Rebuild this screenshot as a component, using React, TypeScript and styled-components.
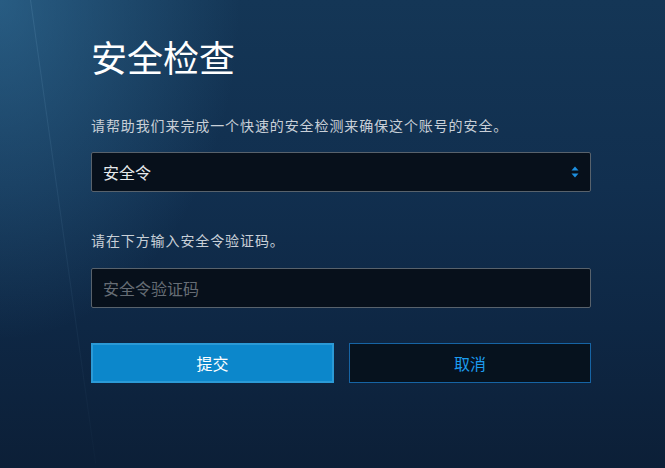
import React from "react";
import styled, { createGlobalStyle } from "styled-components";

const GlobalStyle = createGlobalStyle`
  html, body {
    margin: 0;
    padding: 0;
    width: 665px;
    height: 468px;
    overflow: hidden;
  }
  body {
    font-family: "Noto Sans CJK SC", "Noto Sans", sans-serif;
    background: #0e2440;
  }
`;

const Page = styled.div`
  position: relative;
  width: 665px;
  height: 468px;
  box-sizing: border-box;
  padding: 36px 0 0 91px;
  overflow: hidden;
  background:
    radial-gradient(ellipse 240px 340px at 0px 0px, rgba(60, 130, 175, 0.5), rgba(60, 130, 175, 0) 100%),
    linear-gradient(180deg, #143656 0%, #112f4f 40%, #0e2744 70%, #0c1f37 100%);
`;

const Streak = styled.div`
  position: absolute;
  left: 30px;
  top: 0;
  width: 1px;
  height: 468px;
  background: linear-gradient(180deg, rgba(120, 170, 205, 0.18), rgba(120, 170, 205, 0.02));
  transform: rotate(-8deg);
  transform-origin: top left;
`;

const Form = styled.div`
  position: relative;
  width: 500px;
  display: flex;
  flex-direction: column;
`;

const Title = styled.h1`
  margin: 0;
  font-size: 36px;
  line-height: 40px;
  font-weight: 400;
  color: #ffffff;
`;

const Text = styled.p<{ $top: number }>`
  margin: ${(p) => p.$top}px 0 0 0;
  font-size: 14px;
  line-height: 20px;
  letter-spacing: 0.9px;
  color: #c9d0d8;
`;

const Field = styled.div<{ $top: number }>`
  margin-top: ${(p) => p.$top}px;
  height: 40px;
  box-sizing: border-box;
  border: 1px solid #58626c;
  border-radius: 2px;
  background: #07101b;
  display: flex;
  align-items: center;
  padding: 0 11px 0 11px;
  font-size: 16px;
`;

const Value = styled.span`
  flex: 1;
  color: #e6e9ec;
`;

const Placeholder = styled.span`
  flex: 1;
  color: #666d75;
`;

const Buttons = styled.div`
  margin-top: 35px;
  display: grid;
  grid-template-columns: 243px 242px;
  column-gap: 15px;
`;

const Button = styled.button<{ $primary?: boolean }>`
  height: 40px;
  box-sizing: border-box;
  font-family: "Noto Sans CJK SC", "Noto Sans", sans-serif;
  font-size: 16px;
  padding: 0;
  cursor: pointer;
  background: ${(p) => (p.$primary ? "#0c87cb" : "#06121e")};
  border: ${(p) => (p.$primary ? "2px solid #2b9ad6" : "1px solid #1664a4")};
  color: ${(p) => (p.$primary ? "#ffffff" : "#1c9cee")};
`;

const Arrows = () => (
  <svg width="8" height="12" viewBox="0 0 8 12">
    <path d="M4 0.5 L7.5 4.5 H0.5 Z" fill="#1d8fe0" />
    <path d="M4 11.5 L7.5 7.5 H0.5 Z" fill="#1d8fe0" />
  </svg>
);

export default function App() {
  return (
    <Page>
      <GlobalStyle />
      <Streak />
      <Form>
        <Title>安全检查</Title>
        <Text $top={39}>请帮助我们来完成一个快速的安全检测来确保这个账号的安全。</Text>
        <Field $top={17}>
          <Value>安全令</Value>
          <Arrows />
        </Field>
        <Text $top={38}>请在下方输入安全令验证码。</Text>
        <Field $top={18}>
          <Placeholder>安全令验证码</Placeholder>
        </Field>
        <Buttons>
          <Button $primary>提交</Button>
          <Button>取消</Button>
        </Buttons>
      </Form>
    </Page>
  );
}
